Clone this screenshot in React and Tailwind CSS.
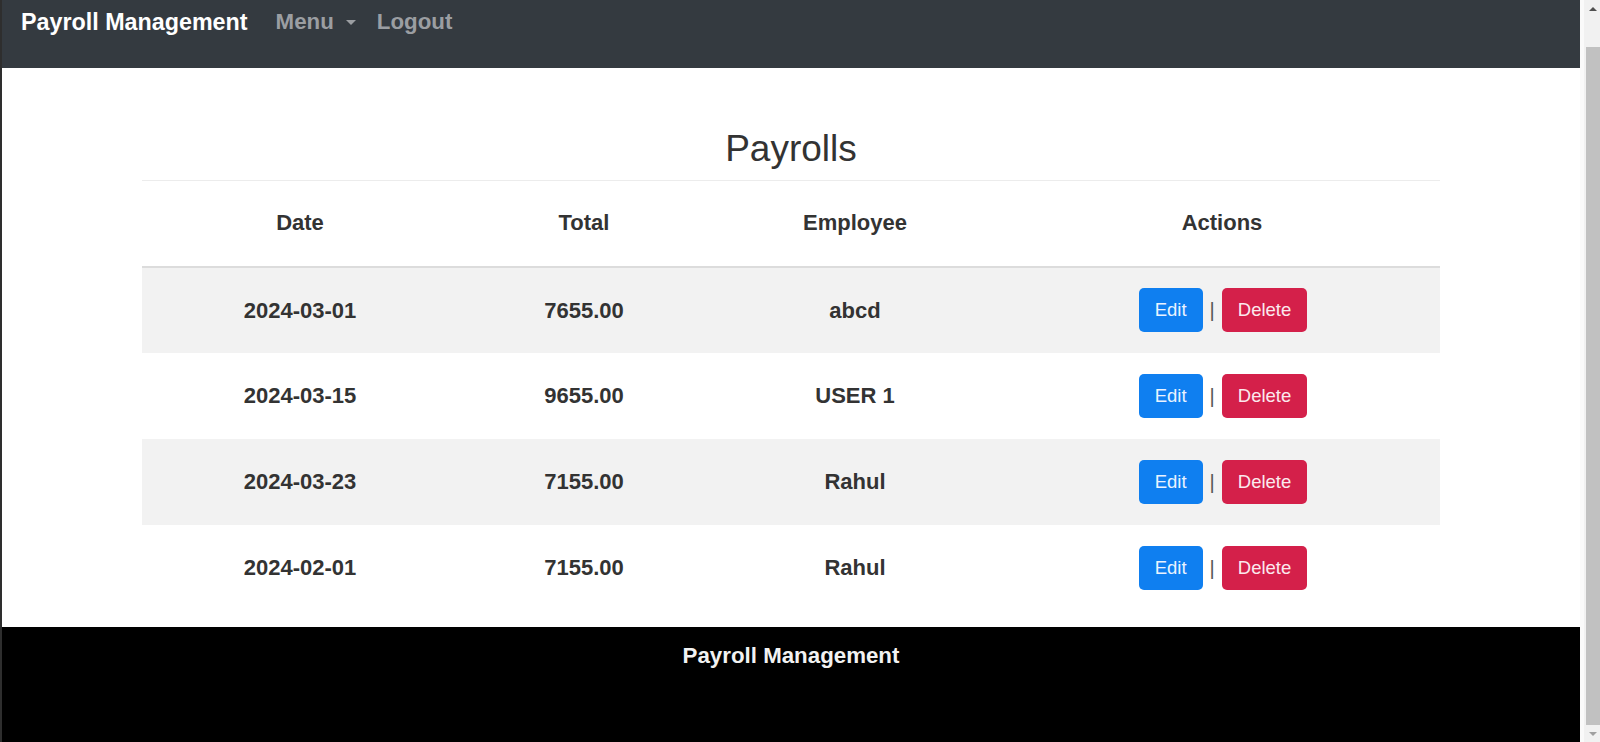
import React from "react";

const rows = [
  { date: "2024-03-01", total: "7655.00", emp: "abcd", shaded: true },
  { date: "2024-03-15", total: "9655.00", emp: "USER 1", shaded: false },
  { date: "2024-03-23", total: "7155.00", emp: "Rahul", shaded: true },
  { date: "2024-02-01", total: "7155.00", emp: "Rahul", shaded: false },
];

export default function App() {
  return (
    <div
      className="flex h-[742px] w-[1600px] overflow-hidden bg-white"
      style={{ fontFamily: '"Liberation Sans", Arial, sans-serif' }}
    >
      <div className="w-[2px] shrink-0 bg-[#2e2e2e]" />
      <div className="flex w-[1578px] shrink-0 flex-col">
        <nav className="flex h-[68px] shrink-0 items-start bg-[#343a40] pl-[19px] pt-[8px]">
          <span className="text-[23.3px] font-bold leading-[28px] text-white">Payroll Management</span>
          <span className="ml-[28px] flex items-center text-[22.3px] font-bold leading-[28px] text-[#9b9ea2]">
            Menu
            <span className="ml-[12px] mt-[1px] h-0 w-0 border-x-[5px] border-t-[5px] border-x-transparent border-t-[#9b9ea2]" />
          </span>
          <span className="ml-[21px] text-[22.3px] font-bold leading-[28px] text-[#9b9ea2]">Logout</span>
        </nav>

        <main className="mb-[16px] shrink-0 pt-[59px]">
          <h2 className="mb-[9px] text-center text-[37px] font-normal leading-[44px] text-[#333]">Payrolls</h2>
          <table className="mx-auto w-[1298px] table-fixed border-collapse text-[22px] font-bold text-[#333]">
            <colgroup>
              <col className="w-[316px]" />
              <col className="w-[252px]" />
              <col className="w-[290px]" />
              <col className="w-[440px]" />
            </colgroup>
            <thead>
              <tr className="h-[86px] border-t border-b-2 border-t-[#ececec] border-b-[#dcdcdc]">
                <th className="pb-[2px] text-center font-bold">Date</th>
                <th className="pb-[2px] text-center font-bold">Total</th>
                <th className="pb-[2px] text-center font-bold">Employee</th>
                <th className="pb-[2px] pl-[4px] text-center font-bold">Actions</th>
              </tr>
            </thead>
            <tbody>
              {rows.map((r, i) => (
                <tr key={i} className={`h-[86px] ${r.shaded ? "bg-[#f2f2f2]" : "bg-white"}`}>
                  <td className="text-center">{r.date}</td>
                  <td className="text-center">{r.total}</td>
                  <td className="text-center">{r.emp}</td>
                  <td className="pl-[6px] text-center">
                    <div className="inline-flex items-center">
                      <button className="h-[44px] rounded-[5px] bg-[#0f7ff0] px-[16px] text-[18.5px] font-normal text-[#eaf3ff]">
                        Edit
                      </button>
                      <span className="mx-[7px] text-[20px] font-normal text-[#555]">|</span>
                      <button className="h-[44px] rounded-[5px] bg-[#d4204a] px-[16px] text-[18.5px] font-normal text-[#fbe9ee]">
                        Delete
                      </button>
                    </div>
                  </td>
                </tr>
              ))}
            </tbody>
          </table>
        </main>

        <footer className="flex-1 bg-black pt-[15px] text-center">
          <span className="text-[22.3px] font-bold leading-[28px] text-[#f2f2f2]">Payroll Management</span>
        </footer>
      </div>

      <div className="flex w-[22px] shrink-0 flex-col border-l-[4px] border-l-[#fafafa] bg-[#f1f1f1]">
        <div className="flex h-[17px] items-center justify-center">
          <div className="h-0 w-0 border-x-[4px] border-b-[4px] border-x-transparent border-b-[#505050]" />
        </div>
        <div className="flex-1 pt-[30px]">
          <div className="mx-auto h-[678px] w-[15px] bg-[#c1c1c1]" />
        </div>
        <div className="flex h-[17px] items-center justify-center">
          <div className="h-0 w-0 border-x-[4px] border-t-[4px] border-x-transparent border-t-[#a0a0a0]" />
        </div>
      </div>
    </div>
  );
}
